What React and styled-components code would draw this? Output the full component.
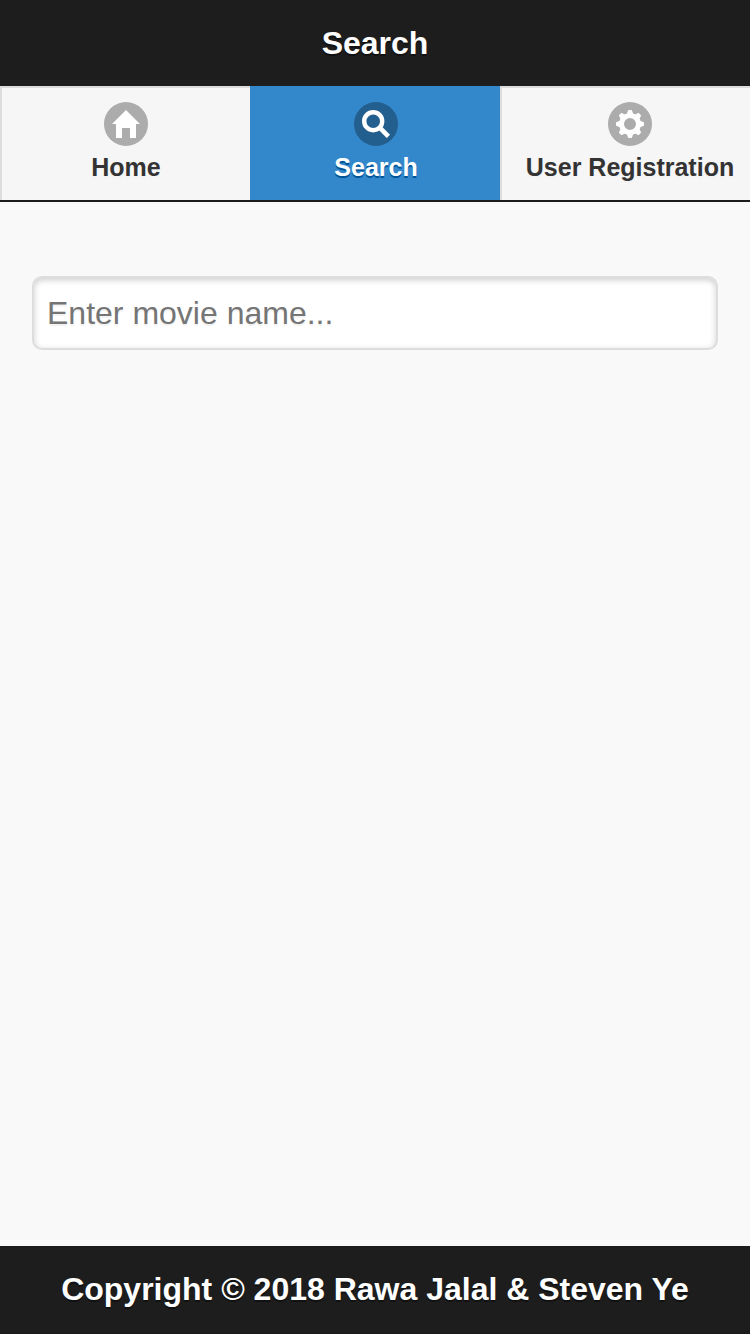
import React from "react";
import styled, { createGlobalStyle, css } from "styled-components";

const GlobalStyle = createGlobalStyle`
  *, *::before, *::after { box-sizing: border-box; }
  body {
    margin: 0;
    background: #f9f9f9;
    font-family: "Liberation Sans", Arial, Helvetica, sans-serif;
  }
`;

const Page = styled.div`
  display: flex;
  flex-direction: column;
  width: 100%;
  height: 100vh;
  overflow: hidden;
  background: #f9f9f9;
  color: #333;
  font-size: 32px;
`;

const bar = css`
  flex: none;
  background: #1d1d1d;
  color: #fff;
  text-shadow: 0 2px 0 #111;
  text-align: center;
`;

const Header = styled.header`
  ${bar}
  border-bottom: 2px solid #1b1b1b;
`;

const Footer = styled.footer`
  ${bar}
  height: 88px;
  border: solid #1b1b1b;
  border-width: 2px 0;
`;

const Title = styled.h1`
  margin: 0;
  height: ${(p) => p.$height};
  font-size: 32px;
  font-weight: 700;
  line-height: ${(p) => p.$height};
  white-space: nowrap;
`;

const NavBar = styled.nav`
  display: grid;
  grid-template-columns: repeat(3, 250px);
  height: 114px;
  text-shadow: none;
`;

const NavItem = styled.a`
  display: flex;
  flex-direction: column;
  align-items: center;
  width: ${(p) => (p.$wide ? "258px" : "250px")};
  height: 114px;
  padding-top: 14px;
  border: solid ${(p) => (p.$active ? "#38c" : "#ddd")};
  border-width: 2px 0 0 2px;
  background: ${(p) => (p.$active ? "#38c" : "#f6f6f6")};
  color: ${(p) => (p.$active ? "#fff" : "#333")};
  text-shadow: 0 2px 0 ${(p) => (p.$active ? "#059" : "#f3f3f3")};
  text-decoration: none;
`;

const IconDisc = styled.span`
  display: grid;
  place-items: center;
  width: 44px;
  height: 44px;
  border-radius: 50%;
  background: rgba(0, 0, 0, 0.3);
`;

const Icon = styled.svg`
  display: block;
  width: 28px;
  height: 28px;
  fill: #fff;
`;

const NavLabel = styled.span`
  margin-top: 5px;
  font-size: 25px;
  font-weight: 700;
  line-height: 32px;
  white-space: nowrap;
`;

const Content = styled.main`
  flex: 1;
  padding: 74px 32px 32px;
`;

const SearchInput = styled.input`
  display: block;
  width: 100%;
  height: 74px;
  padding: 0 13px;
  border: 2px solid #ddd;
  border-radius: 10px;
  outline: 0;
  background: #fff;
  box-shadow: inset 0 2px 6px rgba(0, 0, 0, 0.2);
  color: #333;
  font: 32px "Liberation Sans", Arial, Helvetica, sans-serif;
  text-shadow: 0 2px 0 #f3f3f3;

  &::placeholder {
    color: #757575;
    opacity: 1;
  }
`;

const HomeIcon = () => (
  <Icon viewBox="0 0 14 14">
    <path d="M7 0 0 7h2v7h3V9h4v5h3V7h2z" />
  </Icon>
);

const SearchIcon = () => (
  <Icon viewBox="0 0 14 14">
    <g fill="none" stroke="#fff" strokeWidth="2.2">
      <circle cx="5.6" cy="5.6" r="4.5" />
      <path d="M8.6 8.6 13.2 13.2" strokeWidth="2.3" />
    </g>
  </Icon>
);

const GearIcon = () => (
  <Icon viewBox="0 0 14 14">
    <circle cx="7" cy="7" r="4.2" fill="none" stroke="#fff" strokeWidth="2.4" />
    {[0, 90, 180, 270].map((angle) => (
      <g key={angle} transform={`rotate(${angle} 7 7)`}>
        <path d="M5.1 2.2Q5.7 1.6 5.85.6Q6 0 6.4 0H7.6Q8 0 8.15.6Q8.3 1.6 8.9 2.2L8 3.2H6z" />
        <path
          transform="rotate(45 7 7)"
          d="M5.1 2.2Q5.7 1.6 5.85.6Q6 0 6.4 0H7.6Q8 0 8.15.6Q8.3 1.6 8.9 2.2L8 3.2H6z"
        />
      </g>
    ))}
  </Icon>
);

const items = [
  { label: "Home", Glyph: HomeIcon },
  { label: "Search", Glyph: SearchIcon, active: true },
  { label: "User Registration", Glyph: GearIcon, wide: true },
];

export default function App() {
  return (
    <Page>
      <GlobalStyle />
      <Header>
        <Title $height="86px">Search</Title>
        <NavBar>
          {items.map(({ label, Glyph, active, wide }) => (
            <NavItem key={label} $active={active} $wide={wide}>
              <IconDisc>
                <Glyph />
              </IconDisc>
              <NavLabel>{label}</NavLabel>
            </NavItem>
          ))}
        </NavBar>
      </Header>
      <Content>
        <SearchInput type="text" placeholder="Enter movie name..." />
      </Content>
      <Footer>
        <Title as="h4" $height="82px">Copyright © 2018 Rawa Jalal &amp; Steven Ye</Title>
      </Footer>
    </Page>
  );
}
